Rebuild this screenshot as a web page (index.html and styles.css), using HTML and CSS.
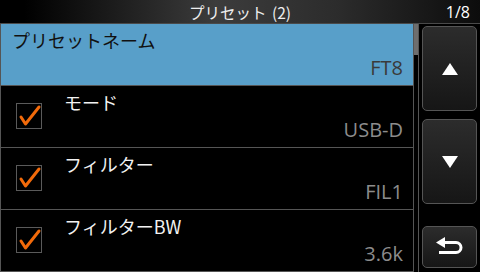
FILE: index.html
```html
<!DOCTYPE html>
<html lang="ja">
<head>
    <meta charset="UTF-8">
    <title>プリセット</title>
    <link rel="stylesheet" href="styles.css">
</head>
<body>
    <div class="screen">
        <div class="title-bar">
            <span></span>
            <span class="title">プリセット (2)</span>
            <span class="page">1/8</span>
        </div>

        <div class="main">
            <div class="list">
                <div class="row selected">
                    <div class="label">プリセットネーム</div>
                    <div class="value">FT8</div>
                </div>
                <div class="row">
                    <div class="check">
                        <svg width="26" height="26" viewBox="0 0 26 26"><path d="M5 14 L9.5 21 L23 4" fill="none" stroke="#f26a0a" stroke-width="3" stroke-linecap="round" stroke-linejoin="round"/></svg>
                    </div>
                    <div class="label">モード</div>
                    <div class="value">USB-D</div>
                </div>
                <div class="row">
                    <div class="check">
                        <svg width="26" height="26" viewBox="0 0 26 26"><path d="M5 14 L9.5 21 L23 4" fill="none" stroke="#f26a0a" stroke-width="3" stroke-linecap="round" stroke-linejoin="round"/></svg>
                    </div>
                    <div class="label">フィルター</div>
                    <div class="value">FIL1</div>
                </div>
                <div class="row">
                    <div class="check">
                        <svg width="26" height="26" viewBox="0 0 26 26"><path d="M5 14 L9.5 21 L23 4" fill="none" stroke="#f26a0a" stroke-width="3" stroke-linecap="round" stroke-linejoin="round"/></svg>
                    </div>
                    <div class="label">フィルターBW</div>
                    <div class="value">3.6k</div>
                </div>
            </div>

            <div class="scrollbar"><div class="thumb"></div></div>

            <div class="buttons">
                <div class="btn big">
                    <svg width="16" height="12" viewBox="0 0 16 12"><polygon points="8,0 16,12 0,12" fill="#fff"/></svg>
                </div>
                <div class="btn big">
                    <svg width="16" height="12" viewBox="0 0 16 12"><polygon points="0,0 16,0 8,12" fill="#fff"/></svg>
                </div>
                <div class="btn back">
                    <svg width="28" height="20" viewBox="0 0 28 20"><polygon points="0,5.5 9,0 9,11" fill="#fff"/><path d="M8 5.5 H20 A5 5 0 0 1 20 15.5 H3" fill="none" stroke="#fff" stroke-width="3"/></svg>
                </div>
            </div>
        </div>
    </div>
</body>
</html>
```

FILE: styles.css
```css
body {
    margin: 0;
    background-color: #000;
    font-family: "Open Sans", "Noto Sans CJK JP", sans-serif;
}

.screen {
    width: 480px;
    height: 272px;
    overflow: hidden;
    background-color: #000;
}

.title-bar {
    display: grid;
    grid-template-columns: 1fr auto 1fr;
    align-items: center;
    height: 23px;
    border-bottom: 1px solid #4a4a4a;
    background: linear-gradient(to right, #000 5%, #3c3c3c 45%, #2c2c2c 70%, #0c0c0c 100%);
    color: #eee;
}

.title {
    font-size: 15.5px;
    font-family: "Noto Sans CJK JP", sans-serif;
    word-spacing: 2px;
}

.page {
    justify-self: end;
    padding-right: 10px;
    font-size: 16px;
    color: #fff;
}

.main {
    display: flex;
    height: 248px;
}

.list {
    width: 412px;
    border-left: 1px solid #555;
}

.row {
    position: relative;
    height: 61px;
    border-bottom: 1px solid #555;
    box-sizing: content-box;
    display: flex;
    flex-direction: column;
    justify-content: space-between;
    padding-left: 63px;
    padding-right: 10px;
}

.row.selected {
    background-color: #589fc9;
    padding-left: 11px;
}

.label {
    font-family: "Noto Sans CJK JP", sans-serif;
    font-size: 18px;
    line-height: 22px;
    padding-top: 5px;
    color: #f2f2f2;
}

.selected .label {
    color: #111;
}

.value {
    align-self: flex-end;
    font-size: 20px;
    line-height: 22px;
    padding-bottom: 6px;
    color: #8c8c8c;
}

.selected .value {
    color: #3a3a3a;
}

.check {
    position: absolute;
    left: 15px;
    top: 17px;
    width: 26px;
    height: 26px;
    border: 1px solid #5a5a5a;
    box-sizing: border-box;
}

.check svg {
    position: absolute;
    left: -1px;
    top: -1px;
}

.scrollbar {
    width: 4px;
    border-left: 1px solid #555;
    border-right: 1px solid #555;
}

.thumb {
    height: 31px;
    background-color: #6e6e6e;
}

.buttons {
    display: flex;
    flex-direction: column;
    margin-left: 3px;
    padding-top: 2px;
    width: 55px;
}

.btn {
    display: flex;
    align-items: center;
    justify-content: center;
    border: 1px solid #555;
    border-radius: 5px;
    background: linear-gradient(to bottom, #2c2c2c, #161616);
    box-sizing: border-box;
}

.btn.big {
    height: 85px;
    margin-bottom: 8px;
}

.btn.back {
    height: 42px;
    margin-top: 14px;
}
```
